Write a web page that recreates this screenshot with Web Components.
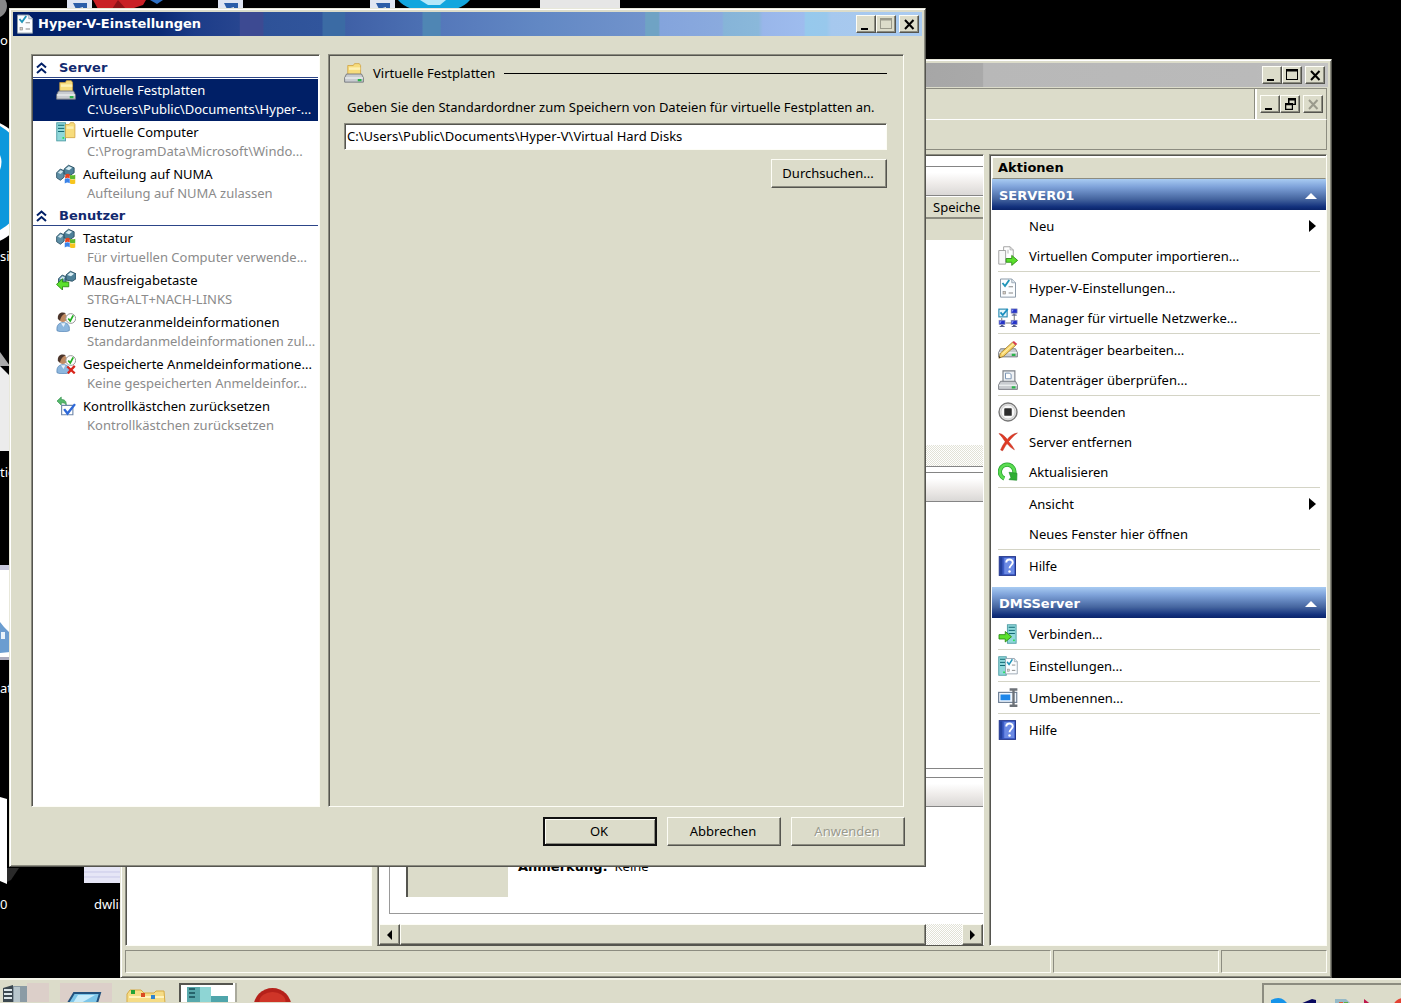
<!DOCTYPE html>
<html lang="de">
<head>
<meta charset="utf-8">
<title>Hyper-V-Einstellungen</title>
<style>
html,body{margin:0;height:100%;overflow:hidden;background:#000}
body{font:13px/16px "Noto Sans","DejaVu Sans Condensed",sans-serif;
 --strong:bold 13px/16px "DejaVu Sans",sans-serif;
 --face:#dcdcca;--hi:#fdfdf6;--sh:#8c8c80;--dk:#55554f;--navy:#001f66;color:#000}
</style>
</head>
<body>
<win-desktop></win-desktop>
<script>
const S='xmlns="http://www.w3.org/2000/svg"';
const server=(x,y,w=7,h=15)=>`<rect x="${x}" y="${y}" width="${w}" height="${h}" fill="#8fd8da" stroke="#4a9aa2" stroke-width=".7"/><path d="M${x+1} ${y+2}h${w-2}M${x+1} ${y+4.5}h${w-2}M${x+1} ${y+7}h${w-2}" stroke="#126873" stroke-width=".8"/><rect x="${x+w-2.4}" y="${y+h-3}" width="1.3" height="1.3" fill="#19e04a"/>`;
const folder=(x,y,w,h)=>`<path d="M${x} ${y+1.5}h${w*.4}l1-1.5h${w*.35}l1 1.5v${h}H${x}z" fill="#f7dc7c" stroke="#cf9f3b" stroke-width=".6"/><path d="M${x+1} ${y+3}h${w-2}v2h-${w-2}z" fill="#fdf0b4"/>`;
const keys=`<path d="M.5 7l3-3 3 1.500v5l-3 2.500-3-2z" fill="#5e8fa6" stroke="#2b5166" stroke-width=".7"/><path d="M1.500 7l2.200-2 2 1-2 2z" fill="#cfe6ee"/><path d="M6.500 4l3.500-3 4.500 2v4l-3 2-5-1z" fill="#4d8098" stroke="#264b5f" stroke-width=".7"/><path d="M7.500 4l2.700-2.200 2.800 1.200-2.500 2z" fill="#d9eef5"/>`;
const user=`<circle cx="5.500" cy="4.500" r="3.400" fill="#c08a62"/><path d="M1.500 5.500C1 .5 5-.5 8 1 5.500 2 4 3.500 3.200 7z" fill="#4b352b"/><path d="M.8 15c-.6-5 2-6.500 5-6.500s5.500 1.500 4.800 6.500c-3 1.200-7 1.200-9.800 0z" fill="#8db7de" stroke="#5684b4" stroke-width=".6"/><path d="M4 9l2 3 1.500-3z" fill="#e8f2fb"/><circle cx="11.800" cy="5.200" r="3.900" fill="#fff" stroke="#999" stroke-width=".8"/><path d="M9.800 5.200l1.600 2 2.400-4.500" fill="none" stroke="#22b022" stroke-width="1.400"/>`;
const check=`<path d="M2 .8h9l3 3V15.300H2z" fill="#fbfdff" stroke="#8c9aa8" stroke-width=".8"/><path d="M11 .8v3h3" fill="#dde6ee" stroke="#8c9aa8" stroke-width=".6"/><path d="M3.600 4l2 2.400L9 1.600" fill="none" stroke="#2095b8" stroke-width="1.500"/><path d="M8.500 7h3.500M8.500 12h3.500" stroke="#888" stroke-width=".9"/><rect x="4" y="10.800" width="2" height="2" fill="#d9cfc4" stroke="#888" stroke-width=".5"/>`;
const drive=(y)=>`<path d="M2 ${y}h12l1.500 3v3.500H.5V${y+3}z" fill="#c9ccd0" stroke="#70747a" stroke-width=".7"/><path d="M.8 ${y+3.200}h14.400" stroke="#f3f5f7" stroke-width=".9"/><rect x="11" y="${y+4}" width="3" height="1.800" fill="#2ab24a"/>`;
const pc=(x,y)=>`<rect x="${x}" y="${y}" width="4.800" height="3.400" fill="#2634c8" stroke="#8b90b8" stroke-width=".5"/><path d="M${x+.6} ${y+2.700}l1.500-2h-1.500z" fill="#90a0ff"/><path d="M${x+1.500} ${y+4.200}h2M${x+.5} ${y+5}h4" stroke="#59608a" stroke-width=".8"/>`;
const help=`<rect x="1" y=".5" width="13" height="15" fill="#3c5cc6" stroke="#23358a" stroke-width=".8"/><path d="M1.500 1h2v14h-2z" fill="#23409c"/><path d="M5 1.500h8v13H5z" fill="#6b8ae4"/><path d="M6.600 5.200c0-3.200 5.200-3.200 5.200 0 0 2-2.600 2.200-2.600 4.600" fill="none" stroke="#fff" stroke-width="1.500"/><circle cx="9.200" cy="12.300" r="1" fill="#fff"/>`;
const green=`fill="#5be02c" stroke="#2a8a12" stroke-width=".7"`;
const ICONS={
 disk:folder(3,.5,11,8)+drive(8.800),
 vm:server(.6,.6,7,14.500)+folder(7.500,.5,7.500,10.500),
 numa:keys+`<path d="M7.500 8.500q2-1.200 3.500-.2v3.200q-1.800-1-3.800.2z" fill="#e8431f"/><path d="M11.200 8.500q2 1 4.200 0v3.200q-2 1-4.200 0z" fill="#5db92a"/><path d="M7 12q2-1.200 4-.2v3.500q-2-1-4 .2z" fill="#3a83e8"/><path d="M11.200 12q2 1 4.200 0v3.500q-2 1-4.200 0z" fill="#f7c51e"/>`,
 mouse:`<g transform="translate(1.500 0)">${keys}</g><path d="M.4 11.500l4.800-4.500v2.600h5v3.800h-5V16z" ${green}/>`,
 user, userx:user+`<path d="M9 10l6 5.500M15 9.500l-5.500 6" stroke="#d8261c" stroke-width="1.800"/>`,
 reset:`<path d="M.8 4l3.400-3.200v2c3 0 4.200 1.500 4 4.500-.8-1.500-2-2-4-1.800v1.800z" fill="#55b96b" stroke="#2f8c48" stroke-width=".5"/><path d="M4.500 7.500h9v7.500h-9z" fill="#fff" stroke="#6f87aa" stroke-width=".9"/><path d="M6.500 10.500l2.700 3.500 6-7.500" fill="none" stroke="#2d68d8" stroke-width="1.900"/>`,
 check,
 imp:`<path d="M4.500.6h5.200l2.500 2.500v7.500H4.500z" fill="#fff" stroke="#999" stroke-width=".7"/><path d="M.6 3.600h5.500V14.500H.6z" fill="#f8f8f8" stroke="#999" stroke-width=".7"/><path d="M9.700.6v2.500h2.500M8 3v3" fill="none" stroke="#aaa" stroke-width=".7"/><path d="M6.500 10h4.500V7.500l4.700 4-4.700 4V13H6.500z" ${green}/>`,
 net:`<path d="M13 5v5M6 12h5M3 8v2" stroke="#777" stroke-width=".8"/><rect x=".7" y=".9" width="6.600" height="6.200" fill="#e6f6fb" stroke="#2888b0" stroke-width=".9"/><path d="M2 3.500l1.800 2.200L7.800.8" fill="none" stroke="#1b8fc0" stroke-width="1.400"/>${pc(10.500,.7)}${pc(.8,9.800)}${pc(10.500,9.800)}`,
 edit:drive(7)+`<path d="M.7 14.500l1.200-4L11.500 1.800l2.700 2.400L4.500 13z" fill="#f7d36a" stroke="#96701d" stroke-width=".6"/><path d="M3.200 11.500l9.500-8.500" stroke="#fff0a8" stroke-width=".9"/><path d="M11.500 1.800l1.200-1 2.700 2.400-1.200 1z" fill="#d83a4e"/><path d="M.7 14.500l.5-1.600 1 .9z" fill="#222"/>`,
 inspect:`<path d="M4 .7h9.500v9H4z" fill="#eef1f4" stroke="#7b8087" stroke-width=".9"/><path d="M6 2.500h3l1.500 1V7H6z" fill="#fff" stroke="#7c96b5" stroke-width=".8"/>`+drive(9),
 stop:`<circle cx="8" cy="8" r="7.200" fill="#e4e4e4" stroke="#777" stroke-width="1.100"/><circle cx="8" cy="8" r="5.600" fill="#f8f8f8" stroke="#bbb" stroke-width=".5"/><rect x="5" y="5" width="6" height="6" rx=".5" fill="#2c2c2c"/>`,
 del:`<path d="M.8 1.200c2.700.2 4.800 2.400 6.600 4.700C9.500 3.300 12 1.300 15.500.8 12.500 3 10.300 5.300 8.500 7.700c1.900 2.200 3.700 4.400 4.600 6.500-2.200-1.200-4.200-3-5.900-5-1.500 2-2.500 4-3.500 5.800l-1.600-.6c1-2.600 2.100-4.600 3.700-6.600C4.300 5.400 2.700 3.200.8 1.200z" fill="#e03a24" stroke="#b8281a" stroke-width=".4"/>`,
 refresh:`<path d="M5 13.200A5.800 5.800 0 1 1 13 9" fill="none" stroke="#27a32e" stroke-width="3.400"/><path d="M5 13.200A5.800 5.800 0 1 1 13 9" fill="none" stroke="#5bdc52" stroke-width="2.200"/><path d="M8.800 8.200l6.400.8-.2 5.600-6.200-.5 1.500-1.800z" fill="#2fae33" stroke="#1f8c2a" stroke-width=".5"/>`,
 help,
 connect:server(7.500,.6,7,14.800)+`<path d="M.8 8.500h5V6l5 4.200-5 4.200V12h-5z" ${green}/>`,
 settings:server(.6,.6,6,14.800)+`<g transform="translate(4.500 1.300) scale(.78 .85)">${check}</g>`,
 rename:`<rect x=".5" y="3.500" width="14.500" height="8" fill="#eef6ff" stroke="#6a7c92" stroke-width=".9"/><rect x="2" y="5.200" width="7.800" height="4.600" fill="#1c86ea"/><path d="M9.300 1.200h6.200M9.300 14.200h6.200M12.400 1.200v13" fill="none" stroke="#6d7278" stroke-width="1.900"/>`,
};
const def=(name,css,html)=>customElements.define(name,class extends HTMLElement{
 constructor(){super();this.attachShadow({mode:'open'})}
 connectedCallback(){if(this.shadowRoot.childNodes.length)return;
  this.shadowRoot.innerHTML=`<style>*{box-sizing:border-box}button{font:inherit;color:inherit;margin:0;padding:0;border:0;background:none;text-align:left}${css}</style>${typeof html==='function'?html(this):html}`}
});
const at=(e,n)=>e.getAttribute(n)||'';

def('ui-icon',':host{display:block;flex:none;width:20px;height:20px}svg{display:block;width:100%;height:100%}',
 e=>`<svg ${S} viewBox="0 0 16 16" aria-hidden="true">${ICONS[at(e,'name')]||''}</svg>`);

const GLYPH={min:'<path d="M4 12h7v2H4z"/>',
 max:'<path d="M3 2h12v11H3zM4 4.500v7.500h10V4.500z" fill-rule="evenodd"/>',
 restore:'<path d="M7 2h8v7h-3v5H4V7h3zM8.500 4.500V7H12v.8h1.500V4.500zM5.300 9.300v3.500h5.500V9.300z" fill-rule="evenodd"/>',
 close:'<path d="M5 4l8.500 9M13.500 4L5 13" stroke="currentColor" stroke-width="2"/>'};
def('caption-button',`:host{display:block;color:#000}button{display:block;width:20px;height:18px;background:var(--face);border:1px solid;border-color:var(--hi) var(--dk) var(--dk) var(--hi);box-shadow:inset -1px -1px var(--sh)}
 button:disabled{color:#9a9a8c}svg{display:block;width:18px;height:16px;fill:currentColor}`,
 e=>`<button aria-label="${at(e,'label')}" ${e.hasAttribute('off')?'disabled':''}><svg ${S} viewBox="0 0 18 16">${GLYPH[at(e,'glyph')]}</svg></button>`);
def('caption-buttons',':host{display:flex;align-items:center}caption-button:last-child{margin-left:3px}',
 e=>{const off=at(e,'off').split(' ');return [['min','Minimieren'],[at(e,'middle')||'max','Maximieren'],['close','Schließen']].map(([g,l])=>`<caption-button glyph="${g}" label="${l}" ${off.includes(g)?'off':''}></caption-button>`).join('')});

def('app-window',`:host{display:flex;flex-direction:column;background:var(--face);border:1px solid;border-color:#e8e8da var(--dk) var(--dk) #e8e8da;box-shadow:inset 1px 1px #fff,inset -1px -1px var(--sh);padding:3px}
 header{display:flex;align-items:center;height:24px;flex:none;padding:0 3px 0 2px;background:var(--bar,#b8b8b8);color:#fff}
 h1{font:var(--strong);margin:0 auto 0 3px}`,
 e=>`<header>${at(e,'icon')?`<ui-icon name="${at(e,'icon')}"></ui-icon>`:''}<h1>${at(e,'heading')}</h1><caption-buttons off="${at(e,'off')}"></caption-buttons></header><slot></slot>`);

def('push-button',`:host{display:block}button{display:block;width:100%;height:29px;padding:0 2px 1px 0;text-align:center;background:var(--face);border:1px solid;border-color:var(--hi) var(--dk) var(--dk) var(--hi);box-shadow:inset -1px -1px var(--sh)}
 :host([primary]) button{border:2px solid #111;box-shadow:inset 1px 1px var(--hi),inset -1px -1px var(--sh)}
 button:disabled{color:#9a9a8e;text-shadow:1px 1px #fff}`,
 e=>`<button ${e.hasAttribute('off')?'disabled':''}><slot></slot></button>`);

def('nav-group',`:host{display:block}h2{display:flex;align-items:center;gap:12px;height:21px;margin:0 0 1px;padding:1px 3px 0;font:var(--strong);color:#12296f;border-bottom:1px solid #2c4588}svg{width:11px;height:14px}`,
 e=>`<h2><svg ${S} viewBox="0 0 11 14" fill="none" stroke="#001f66" stroke-width="2"><path d="M1 6.500l4.500-4 4.500 4M1 12l4.500-4 4.500 4"/></svg>${at(e,'heading')}</h2><slot></slot>`);
def('nav-item',`:host{display:block}button{display:flex;gap:7px;width:100%;height:42px;padding:2px 0 0 23px}
 ui-icon{margin-top:-1px}
 span{min-width:0;flex:1}b,i{display:block;font:inherit;line-height:19px;white-space:nowrap}i{color:#8b8b8b;padding-left:4px}
 :host([selected]) button{background:var(--navy);color:#fff}:host([selected]) i{color:#fff}`,
 e=>`<button><ui-icon name="${at(e,'icon')}"></ui-icon><span><b>${at(e,'name')}</b><i>${at(e,'detail')}</i></span></button>`);

def('settings-dialog',`:host{display:flex;flex-direction:column;flex:1;min-height:0;padding:18px 18px 17px}
 .panes{display:flex;gap:8px;flex:1;min-height:0}
 .pane{border:1px solid;border-color:var(--sh) var(--hi) var(--hi) var(--sh);box-shadow:inset 1px 1px var(--dk)}
 nav{width:289px;background:#fff;padding:2px 1px 0}
 section{flex:1;padding:8px 16px 0 15px}
 .head{display:flex;align-items:center;gap:9px}.head h2{font:inherit;margin:0}.head hr{flex:1;margin:0;border:0;border-top:1px solid #000}
 label{display:block;margin:16px 0 8px 3px}
 input{display:block;width:100%;height:27px;font:inherit;padding:0 2px 2px;background:#fff;border:1px solid;border-color:var(--sh) var(--hi) var(--hi) var(--sh);box-shadow:inset 1px 1px var(--dk);border-radius:0;outline:0}
 .browse{width:116px;margin:9px 0 0 auto}
 footer{display:flex;justify-content:flex-end;gap:10px;padding-top:10px;margin-right:-1px}footer push-button{width:114px}`,
 `<div class="panes"><nav class="pane" aria-label="Einstellungen">
 <nav-group heading="Server">
 <nav-item selected icon="disk" name="Virtuelle Festplatten" detail="C:\\Users\\Public\\Documents\\Hyper-..."></nav-item>
 <nav-item icon="vm" name="Virtuelle Computer" detail="C:\\ProgramData\\Microsoft\\Windo..."></nav-item>
 <nav-item icon="numa" name="Aufteilung auf NUMA" detail="Aufteilung auf NUMA zulassen"></nav-item></nav-group>
 <nav-group heading="Benutzer">
 <nav-item icon="numa" name="Tastatur" detail="Für virtuellen Computer verwende..."></nav-item>
 <nav-item icon="mouse" name="Mausfreigabetaste" detail="STRG+ALT+NACH-LINKS"></nav-item>
 <nav-item icon="user" name="Benutzeranmeldeinformationen" detail="Standardanmeldeinformationen zul..."></nav-item>
 <nav-item icon="userx" name="Gespeicherte Anmeldeinformatione..." detail="Keine gespeicherten Anmeldeinfor..."></nav-item>
 <nav-item icon="reset" name="Kontrollkästchen zurücksetzen" detail="Kontrollkästchen zurücksetzen"></nav-item></nav-group></nav>
 <section class="pane"><div class="head"><ui-icon name="disk"></ui-icon><h2>Virtuelle Festplatten</h2><hr></div>
 <label for="path">Geben Sie den Standardordner zum Speichern von Dateien für virtuelle Festplatten an.</label>
 <input id="path" type="text" value="C:\\Users\\Public\\Documents\\Hyper-V\\Virtual Hard Disks">
 <push-button class="browse">Durchsuchen...</push-button></section></div>
 <footer><push-button primary>OK</push-button><push-button>Abbrechen</push-button><push-button off>Anwenden</push-button></footer>`);

def('action-item',`:host{display:block}button{display:flex;align-items:center;gap:11px;width:100%;height:30px;padding:0 4px 0 0}span{flex:1}
 :host([sep])::after{content:"";display:block;height:1px;margin-bottom:1px;background:#d4d4c6}svg{width:7px;height:12px}`,
 e=>`<button><ui-icon name="${at(e,'icon')}"></ui-icon><span><slot></slot></span>${e.hasAttribute('menu')?`<svg ${S} viewBox="0 0 7 12"><path d="M0 0l7 6-7 6z"/></svg>`:''}</button>`);
def('action-group',`:host{display:block;margin-bottom:6px}h3{display:flex;align-items:center;justify-content:space-between;height:31px;margin:0;padding:2px 9px 0 7px;color:#fff;font:var(--strong);background:linear-gradient(#a8cbf2,#7fa3da 25%,#45659f 65%,#12307c 90%,#0a246a)}
 svg{width:12px;height:6px}div{padding:1px 6px 0 6px}`,
 e=>`<h3>${at(e,'heading')}<svg ${S} viewBox="0 0 12 6"><path d="M0 6l6-6 6 6z" fill="#fff"/></svg></h3><div><slot></slot></div>`);
def('action-pane',`:host{display:block;background:#fff;border:1px solid;border-color:var(--sh) var(--hi) var(--hi) var(--sh);box-shadow:inset 1px 1px var(--dk);padding:2px 0 0 2px;overflow:hidden}
 h2{margin:0;height:22px;padding:2px 5px 0;font:var(--strong);background:var(--face);border:1px solid;border-color:var(--hi) transparent var(--sh) var(--hi)}`,
 `<h2>Aktionen</h2><action-group heading="SERVER01">
 <action-item menu>Neu</action-item><action-item icon="imp" sep>Virtuellen Computer importieren...</action-item>
 <action-item icon="check">Hyper-V-Einstellungen...</action-item><action-item icon="net" sep>Manager für virtuelle Netzwerke...</action-item>
 <action-item icon="edit">Datenträger bearbeiten...</action-item><action-item icon="inspect" sep>Datenträger überprüfen...</action-item>
 <action-item icon="stop">Dienst beenden</action-item><action-item icon="del">Server entfernen</action-item><action-item icon="refresh" sep>Aktualisieren</action-item>
 <action-item menu>Ansicht</action-item><action-item sep>Neues Fenster hier öffnen</action-item><action-item icon="help">Hilfe</action-item></action-group>
 <action-group heading="DMSServer"><action-item icon="connect" sep>Verbinden...</action-item><action-item icon="settings" sep>Einstellungen...</action-item>
 <action-item icon="rename" sep>Umbenennen...</action-item><action-item icon="help">Hilfe</action-item></action-group>`);

def('scroll-bar',`:host{display:flex;height:21px;flex:none;background:repeating-conic-gradient(#fff 0 25%,#e2e2d6 0 50%) 0 0/2px 2px}
 button,i{background:var(--face);border:1px solid;border-color:var(--hi) var(--dk) var(--dk) var(--hi);box-shadow:inset -1px -1px var(--sh)}
 button{width:21px;display:grid;place-items:center}i{flex:1;margin-right:36px}svg{width:5px;height:10px}`,
 `<button aria-label="Links"><svg ${S} viewBox="0 0 5 10"><path d="M5 0v10L0 5z"/></svg></button><i></i><button aria-label="Rechts"><svg ${S} viewBox="0 0 5 10"><path d="M0 0v10l5-5z"/></svg></button>`);

def('center-pane',`:host{display:flex;flex-direction:column;background:#fff;border:1px solid;border-color:var(--sh) transparent var(--dk) var(--sh);box-shadow:inset 1px 1px var(--dk);padding:2px 0 0 1px;overflow:hidden}
 div{flex:none}.cap{height:30px;border-bottom:1px solid #858585;background:linear-gradient(#fff 20%,#eeebe9 60%,#dad8d6)}
 .line{border-top:1px solid #858585}
 .cols{height:23px;display:flex;justify-content:flex-end;background:var(--face);border-top:1px solid #fff;border-bottom:2px solid var(--sh)}
 .cols span{width:50px;white-space:nowrap;line-height:21px}
 .row{height:21px;background:var(--face)}.blank{height:205px}
 .dither{height:22px;border-bottom:1px solid #858585;background:repeating-conic-gradient(#fff 0 25%,#e2e2d6 0 50%) 0 0/2px 2px}
 .detail{flex:1;min-height:0;display:flex;align-items:flex-start;gap:10px;margin:0 0 10px 10px;padding:0 0 0 16px;border:solid #999;border-width:0 0 1px 1px}
 .thumb{width:102px;height:90px;background:var(--face);border-left:2px solid var(--dk)}.note{padding-top:51px}.note b{font:var(--strong)}`,
 `<div style="height:9px"></div><div class="line cap"></div><div class="cols"><span>Speiche</span></div><div class="row"></div><div class="blank"></div><div class="dither"></div>
 <div style="height:5px"></div><div class="line cap"></div><div style="height:266px"></div><div class="line" style="height:9px"></div><div class="line cap"></div>
 <div class="detail"><div class="thumb"></div><div class="note"><b>Anmerkung:</b>&nbsp; Keine</div></div><scroll-bar></scroll-bar>`);

def('status-bar',`:host{display:flex;gap:2px;height:23px;flex:none;margin-top:4px}i{border:1px solid;border-color:var(--sh) var(--hi) var(--hi) var(--sh)}.main{flex:1}.mid{width:166px}.end{width:106px}`,'<i class="main"></i><i class="mid"></i><i class="end"></i>');
def('manager-console',`:host{display:flex;flex-direction:column;flex:1;min-height:0;padding:1px}
 .bar{height:31px;flex:none;border:1px solid;border-color:var(--sh) var(--sh) var(--hi) var(--sh);display:flex;justify-content:flex-end;border-bottom:0}
 .bar div{display:flex;padding:0 3px;border-left:2px solid #fff;box-shadow:-1px 0 var(--sh)}
 .tools{height:31px;border-top-color:#fff;border-bottom:1px solid var(--sh)}
 .panes{display:flex;flex:1;min-height:0;gap:5px;margin-top:4px}
 .tree{width:247px;background:#fff;border:1px solid;border-color:var(--sh) var(--hi) var(--hi) var(--sh);box-shadow:inset 1px 1px var(--dk)}
 center-pane{flex:1}action-pane{width:338px}`,
 `<div class="bar"><div><caption-buttons middle="restore" off="close"></caption-buttons></div></div><div class="bar tools"></div>
 <div class="panes"><div class="tree"></div><center-pane></center-pane><action-pane></action-pane></div><status-bar></status-bar>`);

def('task-bar',`:host{display:flex;justify-content:space-between;height:25px;background:var(--face);border-top:2px solid #f4f4ea;overflow:hidden}
 svg{display:block;height:22px}.tray{width:139px;margin-top:3px;border:solid var(--sh);border-width:2px 0 0 2px}`,
 `<svg ${S} width="310" height="22" viewBox="0 981 310 22"><path d="M27 984h22v20H27zM60 984h52v20H60z" fill="#dccfc9"/>
 <path d="M3 989l10-3v18H3z" fill="#3c4850"/><path d="M4 991h8M4 995h8M4 999h8" stroke="#dce6ea" stroke-width="2"/><path d="M13 987h14v17H13z" fill="#8b9ba5"/><path d="M14 988h6v15h-6z" fill="#b8c6cc"/>
 <path d="M74 994h26l-3 10H68z" fill="#7cc5e8" stroke="#23527e" stroke-width="2"/><path d="M78 996h17l-14 8H73z" fill="#c7ebfa"/>
 <path d="M127 995l3-4h11l3 3h10l2-2h8l1 12h-38z" fill="#f5dc86" stroke="#d7ab45"/><path d="M129 998h35" stroke="#fff3bd" stroke-width="2"/><path d="M131 991h4v4h-4z" fill="#22a337"/><path d="M141 994h4v4h-4z" fill="#da4a24"/><path d="M151 996h4v4h-4z" fill="#3184cf"/>
 <path d="M179 984h57v20h-57z" fill="#fff"/><path d="M180 1004v-19h53" fill="none" stroke="#55554f" stroke-width="2"/><path d="M236 984v20" stroke="#a9a99c" stroke-width="2"/>
 <path d="M187 988h15v16h-15z" fill="#58a9ac"/><path d="M189 990h6M189 994h6M189 998h6" stroke="#174e57" stroke-width="1.500"/><path d="M200 988h11v16h-11z" fill="#8ed5d4"/><path d="M211 1000v-3h17v7h-17z" fill="#4fa5ab"/>
 <circle cx="272.500" cy="1008" r="19" fill="#b5211a"/><ellipse cx="272.500" cy="1002" rx="13" ry="9" fill="#cf3528"/></svg>
 <div class="tray"><svg ${S} width="137" height="18" viewBox="1264 985 137 18"><path d="M1271 998q8-4 13 0l4 4v4h-17z" fill="#1694ea"/><path d="M1274 1001h7v5h-7z" fill="#d8f1ff"/><path d="M1300 1002l12-5 4 1v6h-16z" fill="#090960"/><path d="M1335 997h11l4 4v4h-15z" fill="#95b9c7"/><path d="M1339 1000h4v5h-4z" fill="#de5b35"/><path d="M1344 1000h4v5h-4z" fill="#60ad43"/><path d="M1364 997l9 7h-9z" fill="#bd174c"/><circle cx="1403" cy="1006" r="10" fill="#e34233"/></svg></div>`);

def('desktop-icons',`:host{display:block;color:#fff}svg{display:block}span{position:absolute;white-space:nowrap}`,
 `<svg ${S} width="640" height="900" viewBox="0 0 640 900"><circle cx="-5" cy="6" r="12" fill="#888"/>
 <g id="s"><path d="M67 0h25v9H67z" fill="#dfe5f2"/><path d="M73 3h14v6h-4V7l-7 2z" fill="#2b5da8"/></g><path d="M93 0h53l-3 5-12 4H98z" fill="#c92026"/><path d="M118 0l8 9h-14z" fill="#8d1218"/><path d="M150 0h13l-6 4z" fill="#2e70c4"/>
 <use href="#s" x="151"/><use href="#s" x="303"/><path d="M398 0h72q-5 6-14 9h-44q-9-3-14-9z" fill="#12a6de"/><path d="M420 0h26l-6 5h-12z" fill="#b5e8fa"/><path d="M540 0h80v9h-80z" fill="#e6e6e6"/>
 <circle cx="-30" cy="182" r="66" fill="#fff"/><circle cx="-30" cy="178" r="60" fill="#0d98dc"/><path d="M0 155q3 7 0 15z" fill="#fff"/><path d="M0 352l10 14H0z" fill="#aaa"/><path d="M0 366l10 10v75H0z" fill="#ececec"/>
 <path d="M0 565h10v5H0z" fill="#c8c8dc"/><path d="M0 570h10v87H0z" fill="#fff"/><path d="M0 622l4 5 6 6v19l-10 1z" fill="#6b9dd0"/><path d="M1 632h4v7H1z" fill="#e8f3fb"/><path d="M0 657h10v3H0z" fill="#aaaabc"/>
 <path d="M0 797l7 2v85l-7-3z" fill="#fff"/><path d="M7 868h12l-8 12-4 2z" fill="#2a2a2a"/><path d="M84 860h40v23H84z" fill="#e6e6f6"/><path d="M84 872h40M84 877h40" stroke="#c9c9e8"/></svg>
 <span style="left:0;top:32px">o</span><span style="left:0;top:248px">sis</span><span style="left:0;top:464px">tio</span><span style="left:0;top:680px">at</span><span style="left:0;top:896px">0</span><span style="left:94px;top:896px">dwlin</span>`);

def('win-desktop',`:host{display:flex;flex-direction:column;height:100vh;position:relative;overflow:hidden}
 .canvas{flex:1;min-height:0;overflow:hidden}
 .console{position:absolute;left:120px;right:69px;top:59px;bottom:25px;--bar:linear-gradient(90deg,#808080,#a9a9a9 71%,#a9a9a9 71.3%,#b8b8b8 71.4%,#bababa 94%,#c4c4c4)}
 .dialog{position:absolute;left:9px;top:8px;width:917px;height:859px;
 --bar:linear-gradient(90deg,#001f66 0,#0a2a74 16%,#1c3c88 20%,#27458f 24.900%,#3d4a92 25%,#3d4a92 27.500%,#2e5298 27.600%,#31559c 34%,#3b6ba4 34.100%,#3b6ba4 36.500%,#3f60a6 36.600%,#4c70b3 45%,#4f86b4 45.100%,#4f86b4 47%,#5578ba 47.100%,#6288c4 58%,#7193cc 69.500%,#6fa3c4 69.600%,#6fa3c4 71%,#84a4dc 71.200%,#8aaade 78%,#86b4d8 78.200%,#8ab8da 82%,#99b6ea 82.500%,#9ebcee 87%,#96c9ec 87.200%,#98c8ec 89.500%,#a6c8ee 90%,#aacbf0)}`,
 `<div class="canvas"><desktop-icons></desktop-icons></div><task-bar></task-bar>
 <app-window class="console"><manager-console></manager-console></app-window>
 <app-window class="dialog" icon="check" heading="Hyper-V-Einstellungen" off="max"><settings-dialog></settings-dialog></app-window>`);
</script>
</body>
</html>
